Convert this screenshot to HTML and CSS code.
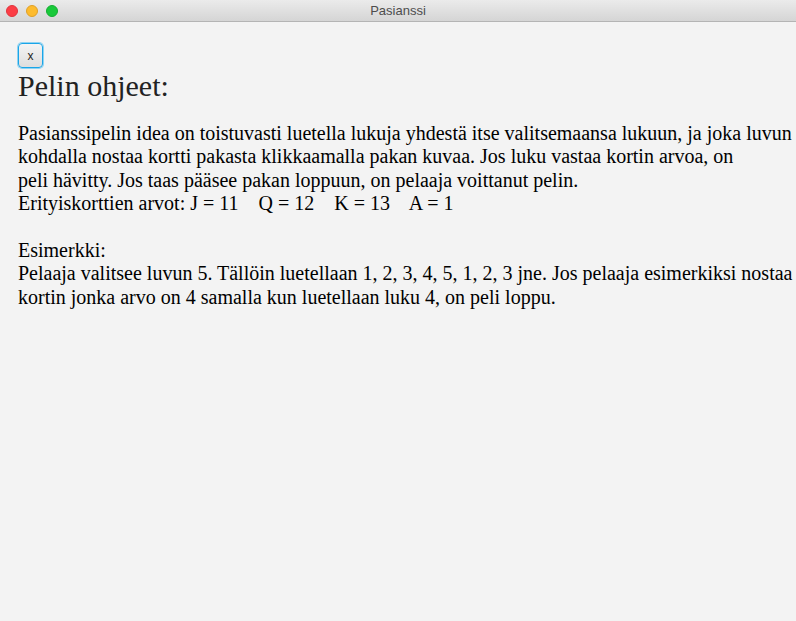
FILE: index.html
```html
<!DOCTYPE html>
<html>
<head>
<meta charset="utf-8">
<link rel="stylesheet" href="styles.css">
</head>
<body>
<div class="window">
  <div class="titlebar">
    <div class="lights">
      <span class="light red"></span>
      <span class="light yellow"></span>
      <span class="light green"></span>
    </div>
    <div class="title">Pasianssi</div>
  </div>
  <div class="content">
    <button class="close-btn">x</button>
    <h1 class="heading">Pelin ohjeet:</h1>
    <div class="text">Pasianssipelin idea on toistuvasti luetella lukuja yhdestä itse valitsemaansa lukuun, ja joka luvun
kohdalla nostaa kortti pakasta klikkaamalla pakan kuvaa. Jos luku vastaa kortin arvoa, on
peli hävitty. Jos taas pääsee pakan loppuun, on pelaaja voittanut pelin.
Erityiskorttien arvot: J = 11    Q = 12    K = 13    A = 1

Esimerkki:
Pelaaja valitsee luvun 5. Tällöin luetellaan 1, 2, 3, 4, 5, 1, 2, 3 jne. Jos pelaaja esimerkiksi nostaa
kortin jonka arvo on 4 samalla kun luetellaan luku 4, on peli loppu.</div>
  </div>
</div>
</body>
</html>
```
FILE: styles.css
```css
html, body {
  margin: 0;
  padding: 0;
  width: 796px;
  height: 621px;
  overflow: hidden;
  background: #f3f3f3;
}
.window {
  display: flex;
  flex-direction: column;
  height: 621px;
}
.titlebar {
  position: relative;
  height: 21px;
  background: linear-gradient(#ebebeb, #d5d5d5);
  border-bottom: 1px solid #b4b4b4;
  display: flex;
  align-items: center;
  justify-content: center;
}
.lights {
  position: absolute;
  left: 6px;
  top: 5px;
  display: flex;
  gap: 8px;
}
.light {
  width: 12px;
  height: 12px;
  border-radius: 50%;
  box-sizing: border-box;
}
.red { background: #fc3d45; border: 1px solid #e0343c; }
.yellow { background: #fdbb2d; border: 1px solid #e0a026; }
.green { background: #19c93a; border: 1px solid #14ad30; }
.title {
  font-family: "Liberation Sans", Arial, sans-serif;
  font-size: 13px;
  color: #4d4d4d;
}
.content {
  padding: 21px 0 0 18px;
  font-family: "Liberation Serif", "Times New Roman", serif;
  color: #000;
}
.close-btn {
  display: block;
  width: 25px;
  height: 25px;
  margin: 0;
  padding: 0;
  border: 1px solid #1aa5e8;
  border-radius: 4px;
  background: linear-gradient(#f4f4f4, #dedede);
  box-shadow: 0 0 0 1px #8fd3f2;
  font-family: "Liberation Sans", Arial, sans-serif;
  font-size: 12px;
  color: #222;
}
.heading {
  margin: 0;
  font-weight: normal;
  font-size: 30px;
  line-height: 36px;
  color: #222;
}
.text {
  margin-top: 18px;
  font-size: 20px;
  line-height: 23.4px;
  white-space: pre;
}
```
